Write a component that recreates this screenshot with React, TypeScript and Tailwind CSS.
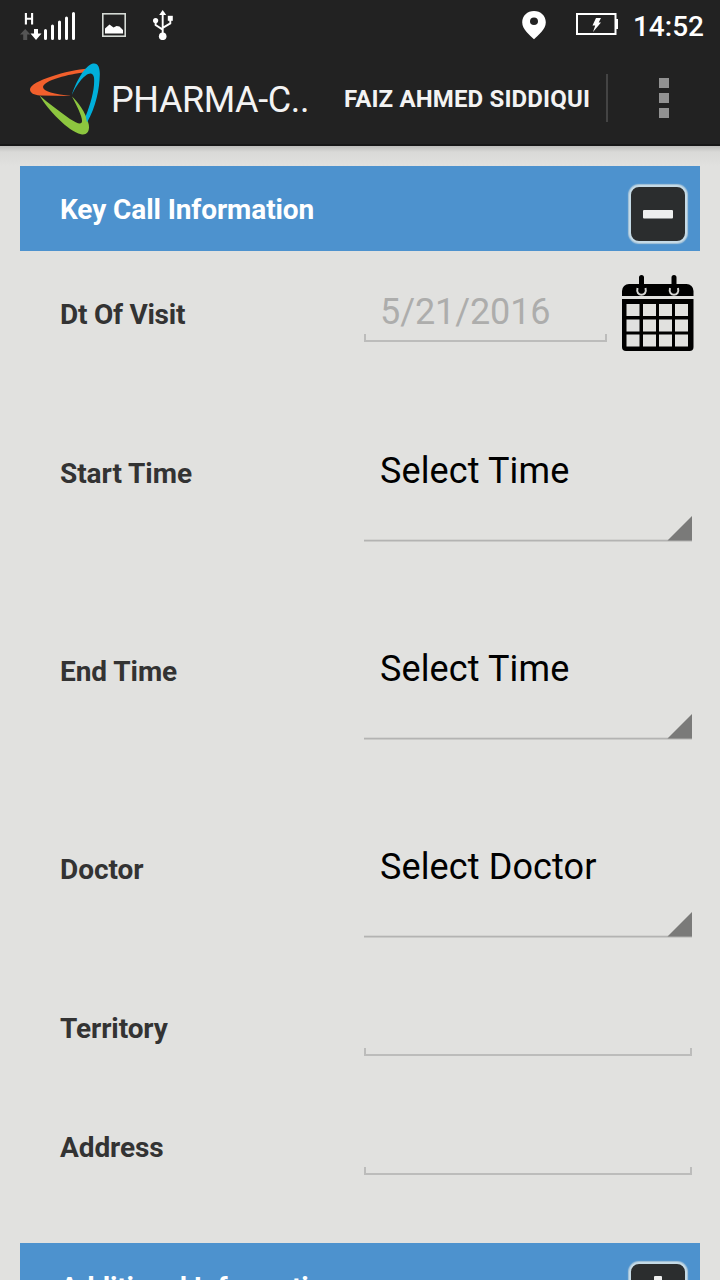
import type { ReactNode } from "react";

function StatusBar() {
  return (
    <div className="flex h-[50px] items-center">
      <svg className="ml-[20px] mt-px h-[32px] w-[56px] shrink-0" viewBox="20 9 56 32">
        <path d="M25.9 12v11.6M32.1 12v11.6M25.9 17.8h6.2" stroke="#fff" strokeWidth="2.1" fill="none" />
        <path d="M20 33.5 25.2 28l5.2 5.5h-3.2V39h-4v-5.5z" fill="#555" />
        <path d="M34 28h4v4.500h3.500L36 39l-5.500-6.500H34z" fill="#fff" />
        <path
          d="M45.5 29.500v8M52.5 25V37.500M59.5 21V37.500M66.5 17V37.500M73.5 12.500v25"
          stroke="#fff"
          strokeWidth="3"
          strokeLinecap="round"
        />
      </svg>
      <svg className="ml-[26px] h-[24px] w-[24px] shrink-0" viewBox="0 0 24 24">
        <rect x="0.8" y="0.8" width="22.4" height="22.4" fill="none" stroke="#d5dad5" strokeWidth="1.6" />
        <path d="M3 20.500v-5l4.500-4 4 3 3-1.500 3 .5 3.500 3.500v3.500z" fill="#fff" />
      </svg>
      <svg className="ml-[27px] h-[30px] w-[20px] shrink-0" viewBox="0 0 20 30">
        <path d="M9.7 4v21M2.6 10v5l7.1 4.600M17.3 8v5.400l-7.600 4.500" fill="none" stroke="#fff" strokeWidth="1.9" />
        <path d="M9.7 0l3.500 5H6.200z" fill="#fff" />
        <circle cx="9.7" cy="26.3" r="3.8" fill="#fff" />
        <circle cx="2.6" cy="10.6" r="2.6" fill="#fff" />
        <rect x="14.8" y="5.8" width="5" height="5" fill="#fff" />
      </svg>
      <svg className="ml-auto h-[30px] w-[24px] shrink-0" viewBox="0 0 24 30">
        <path
          fillRule="evenodd"
          d="M12 1C5.400 1 .2 5.800.2 12.300.2 19.500 8 25.400 12 29.200c4-3.800 11.800-9.700 11.800-16.900C23.800 5.800 18.600 1 12 1zm0 6.500a4 3.800 0 1 1 0 7.600 4 3.800 0 1 1 0-7.600z"
          fill="#fff"
        />
      </svg>
      <svg className="ml-[30px] mb-[2px] h-[22px] w-[42px] shrink-0" viewBox="0 0 42 22">
        <rect x="1" y="1" width="38.5" height="20" fill="none" stroke="#fff" strokeWidth="2" />
        <rect x="40" y="6" width="2" height="10" fill="#fff" />
        <path d="M20 5h5l-2.300 4.500H25L17 19l2.200-6.500h-2.700z" fill="#fff" />
      </svg>
      <span className="ml-[15px] mr-[16px] mt-[4px] text-[28px] leading-none font-medium text-white">14:52</span>
    </div>
  );
}

function Logo() {
  return (
    <svg className="mt-[3px] ml-[30px] h-[72px] w-[70px] shrink-0" viewBox="30 63 70 72">
      <path
        d="M88 68.500C68 70 30 81 30 89.500 30 93 34 95 40 95.500L72 96C54 94 43 91.500 43 87 44 80 70 74 84 72.500z"
        fill="#f15f2c"
      />
      <path
        d="M39.500 95.500C48 110 68 131 81 134.300c6 1.200 9-3 7.700-10C86 112 77 101 72 96.500c5 10 10.500 20 10 25C81.500 125 77 123.500 70 119 59 111 48 103 39.500 95.500z"
        fill="#8dc63f"
      />
      <path
        d="M71.800 95C76 82 84 67 92 63.800c6-2 8 4 7.800 11C99.500 89 96 107 87 122.500c-.5-3-1-5-1.300-6.500C91 103 95 88 94 77.500 92.500 70 86 74 81 80c-4 5-7 10-9.200 15z"
        fill="#00afdb"
      />
    </svg>
  );
}

function ActionBar() {
  return (
    <div className="flex h-[96px] items-center border-b-2 border-[#171717]">
      <Logo />
      <h1 className="mt-[6px] ml-[11px] w-[205px] text-[36px] leading-[44px] tracking-[-0.4px] whitespace-nowrap text-[#f3f3f3]">
        PHARMA-C..
      </h1>
      <span className="mt-[4px] ml-[28px] w-[246px] text-[24px] leading-[30px] font-bold tracking-[0.15px] whitespace-nowrap text-[#f3f3f3]">
        FAIZ AHMED SIDDIQUI
      </span>
      <div className="mt-[2px] ml-[16px] h-[48px] w-[2px] bg-[#444]" />
      <div className="mt-[2px] ml-[51px] flex flex-col gap-[5px]">
        <div className="h-[10px] w-[10px] bg-[#929292]" />
        <div className="h-[10px] w-[10px] bg-[#929292]" />
        <div className="h-[10px] w-[10px] bg-[#929292]" />
      </div>
    </div>
  );
}

function SectionHeader({ title, open }: { title: string; open: boolean }) {
  return (
    <div className="mx-[20px] flex h-[85px] shrink-0 justify-between bg-[#4d92ce] pr-[13px] pl-[40px]">
      <h2
        className={
          open
            ? "mt-[26px] text-[28px] leading-[36px] font-bold tracking-[-0.1px] text-white"
            : "mt-[27px] text-[28px] leading-[36px] font-bold tracking-[-0.15px] text-white"
        }
      >
        {title}
      </h2>
      <button className="mt-[19px] flex h-[58px] w-[58px] items-center justify-center rounded-[10px] border-2 border-[#c5dae6] bg-[#2b2d2e] shadow-[0_0_1px_1px_#a9c6da]">
        <svg className="h-[36px] w-[36px]" viewBox="0 0 36 36">
          <rect x="3" y="14" width="30" height="8.500" rx="1" fill="#eeefef" />
          {!open && <rect x="14" y="3" width="8" height="30" rx="1" fill="#eeefef" />}
        </svg>
      </button>
    </div>
  );
}

function Row({ label, tall = false, children }: { label: string; tall?: boolean; children: ReactNode }) {
  return (
    <div className={tall ? "flex h-[198px] shrink-0 pl-[60px]" : "flex h-[119px] shrink-0 pl-[60px]"}>
      <label
        className={
          tall
            ? "flex w-[304px] items-center pt-[2px] text-[28px] font-bold tracking-[-0.05px] text-[#333]"
            : "flex w-[304px] items-center pt-[3px] text-[28px] font-bold tracking-[-0.1px] text-[#333]"
        }
      >
        {label}
      </label>
      {children}
    </div>
  );
}

function Spinner({ value }: { value: string }) {
  return (
    <div className="flex h-[168px] w-[328px] flex-col justify-between pt-[76px]">
      <span className="pl-[16px] text-[36px] leading-[42px] tracking-[0.12px] text-black">{value}</span>
      <svg className="h-[26px] w-[328px]" viewBox="0 0 328 26">
        <rect y="23.7" width="328" height="1.800" fill="#b3b3b2" />
        <path d="M328 0v24.500H303.500z" fill="#7a7a79" />
      </svg>
    </div>
  );
}

function InputLine() {
  return <div className="h-[8px] border-x-2 border-b-2 border-[#bcbcbb]" />;
}

function CalendarIcon() {
  return (
    <svg className="mt-[20px] ml-[14px] h-[77px] w-[74px]" viewBox="0 0 74 77">
      <path d="M1 21v-5a7 7 0 0 1 7-7h57.500a7 7 0 0 1 7 7v5z" fill="#000" />
      <path d="M1 24h71.500v48a4 4 0 0 1-4 4H5a4 4 0 0 1-4-4z" fill="#000" />
      <g fill="#e1e1df">
        {[29, 44.5, 59.5].map((y) =>
          [5.5, 22, 38, 54].map((x) => <rect key={`${x}-${y}`} x={x} y={y} width="13" height="12" />),
        )}
      </g>
      <path d="M16.500 13c-2.500 9 10.500 9 8 0M49 13c-2.500 9 10.500 9 8 0" fill="none" stroke="#d5d5d3" strokeWidth="2" />
      <path d="M20.500 2.500v12M53 2.500v12" stroke="#000" strokeWidth="5" strokeLinecap="round" />
    </svg>
  );
}

export default function App() {
  return (
    <div className="flex h-[1280px] w-[720px] flex-col overflow-hidden bg-[#e1e1df] font-[Roboto,sans-serif]">
      <header className="h-[146px] shrink-0 bg-[#222]">
        <StatusBar />
        <ActionBar />
      </header>
      <div className="h-[20px] shrink-0 bg-linear-to-b from-[#bdbdbb] via-[#d9d9d7] via-30% to-[#e1e1df]" />
      <SectionHeader title="Key Call Information" open />
      <div className="flex shrink-0 flex-col pt-[4px] pb-[37px]">
        <div className="flex h-[119px] shrink-0 pl-[60px]">
          <label className="flex w-[304px] items-center pt-px text-[28px] font-bold tracking-[-0.25px] text-[#333]">
            Dt Of Visit
          </label>
          <div className="flex h-[87px] w-[243px] flex-col justify-between pt-[36px]">
            <span className="pl-[16px] text-[36px] leading-[42px] tracking-[-0.1px] text-[#adadac]">5/21/2016</span>
            <InputLine />
          </div>
          <CalendarIcon />
        </div>
        <Row label="Start Time" tall>
          <Spinner value="Select Time" />
        </Row>
        <Row label="End Time" tall>
          <Spinner value="Select Time" />
        </Row>
        <Row label="Doctor" tall>
          <Spinner value="Select Doctor" />
        </Row>
        <Row label="Territory">
          <div className="flex h-[88px] w-[328px] flex-col justify-end">
            <InputLine />
          </div>
        </Row>
        <Row label="Address">
          <div className="flex h-[88px] w-[328px] flex-col justify-end">
            <InputLine />
          </div>
        </Row>
      </div>
      <SectionHeader title="Additional Information" open={false} />
    </div>
  );
}
